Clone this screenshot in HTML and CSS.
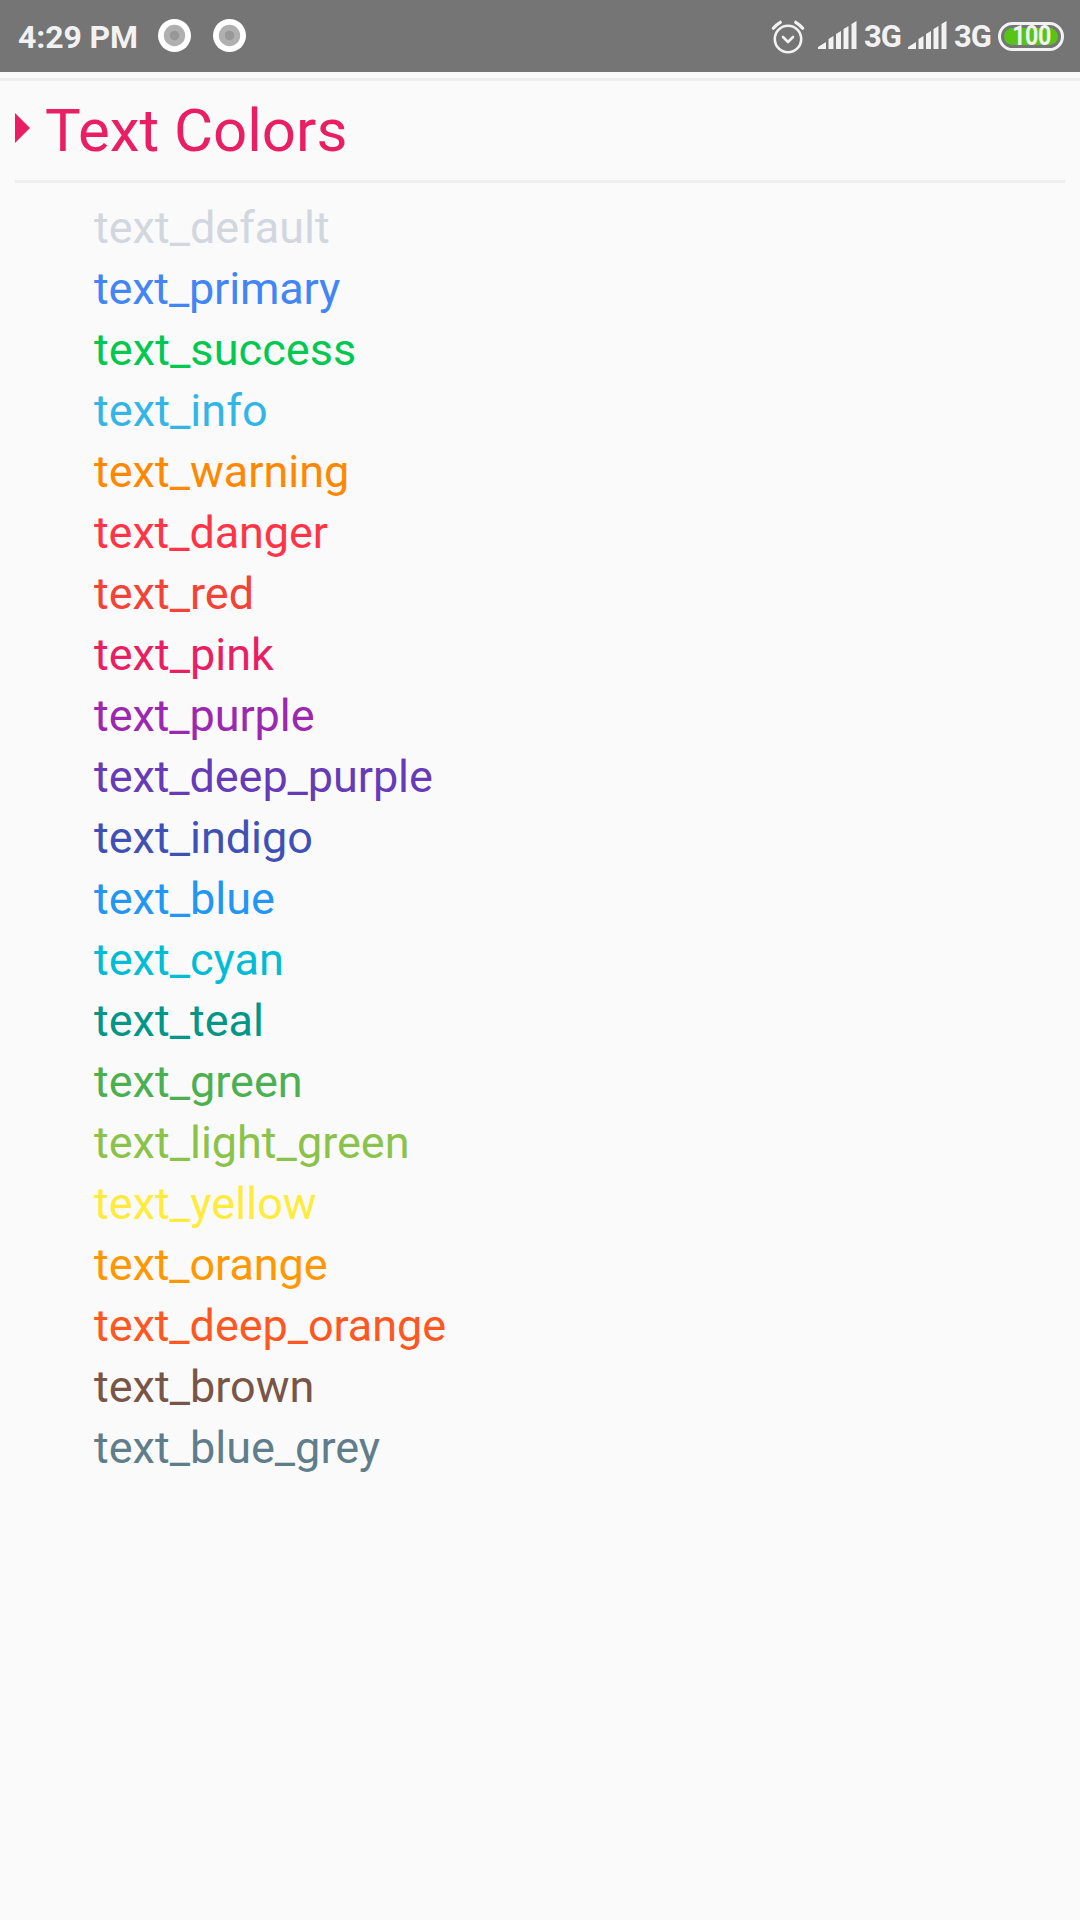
FILE: index.html
```html
<!DOCTYPE html>
<html lang="en">
<head>
<meta charset="utf-8">
<title>Text Colors</title>
<link rel="stylesheet" href="styles.css">
</head>
<body>
<header class="status">
  <span class="time">4:29 PM</span>
  <svg class="dot" viewBox="0 0 33 33"><circle cx="16.500" cy="16.500" r="16.500" fill="#fff"/><circle cx="16.500" cy="16.500" r="10.700" fill="#b0b0b0"/><circle cx="16.500" cy="16.500" r="4.800" fill="#989898"/></svg>
  <svg class="dot second" viewBox="0 0 33 33"><circle cx="16.500" cy="16.500" r="16.500" fill="#fff"/><circle cx="16.500" cy="16.500" r="10.700" fill="#b0b0b0"/><circle cx="16.500" cy="16.500" r="4.800" fill="#989898"/></svg>
  <svg class="alarm" viewBox="0 0 34 34" fill="none" stroke="#f2f2f2" stroke-width="2.6" stroke-linecap="round" stroke-linejoin="round"><circle cx="17" cy="19" r="13.2"/><path d="M12 17l5 5 5-5"/><path d="M2.300 8.200Q5.500 4.500 9.300 2.300M31.700 8.200Q28.500 4.500 24.700 2.300" stroke-width="3.200"/></svg>
  <svg class="signal" viewBox="0 0 39 28" fill="#f2f2f2"><path id="bars" d="M0 28V26L8 21V28ZM10.500 28V18L15.500 15V28ZM18 28V13L23 10V28ZM25.500 28V8L30.500 5V28ZM33.500 28V3L38.500 0V28Z"/></svg>
  <span class="net">3G</span>
  <svg class="signal" viewBox="0 0 39 28" fill="#f2f2f2"><use href="#bars"/></svg>
  <span class="net">3G</span>
  <span class="battery"><span class="level"><span class="percent">100</span></span></span>
</header>
<main>
  <h1><svg class="arrow" viewBox="0 0 15 30"><path d="M0 0 15 15 0 30z" fill="#e91e63"/></svg><span>Text Colors</span></h1>
  <ul>
    <li class="default">text_default</li>
    <li class="primary">text_primary</li>
    <li class="success">text_success</li>
    <li class="info">text_info</li>
    <li class="warning">text_warning</li>
    <li class="danger">text_danger</li>
    <li class="red">text_red</li>
    <li class="pink">text_pink</li>
    <li class="purple">text_purple</li>
    <li class="deep-purple">text_deep_purple</li>
    <li class="indigo">text_indigo</li>
    <li class="blue">text_blue</li>
    <li class="cyan">text_cyan</li>
    <li class="teal">text_teal</li>
    <li class="green">text_green</li>
    <li class="light-green">text_light_green</li>
    <li class="yellow">text_yellow</li>
    <li class="orange">text_orange</li>
    <li class="deep-orange">text_deep_orange</li>
    <li class="brown">text_brown</li>
    <li class="blue-grey">text_blue_grey</li>
  </ul>
</main>
</body>
</html>
```
FILE: styles.css
```css
* { box-sizing: border-box; }
body { margin: 0; height: 1920px; background: #fafafa; font-family: Roboto, sans-serif; }

.status { display: flex; align-items: center; height: 72px; padding: 1px 16px 0 18px; background: #757575; color: #f2f2f2; font-weight: 700; }
.time { width: 140px; font-size: 32px; letter-spacing: -.1px; white-space: nowrap; }
.dot { width: 33px; height: 33px; margin-bottom: 2px; }
.second { margin-left: 22px; margin-right: auto; }
.alarm { width: 34px; height: 34px; margin-right: 13px; }
.signal { width: 39px; height: 28px; margin-bottom: 3px; }
.net { width: 36px; margin: 0 8px 0 7px; font-size: 31px; letter-spacing: -1px; }
.battery { display: flex; width: 66px; height: 29px; padding: 3px; border: 3px solid #f2f2f2; border-radius: 15px; }
.level { display: flex; flex: 1; align-items: center; justify-content: center; border-radius: 10px; background: #56c516; }
.percent { font-size: 27px; line-height: 17px; letter-spacing: -.5px; transform: scaleX(.86); }

main { margin-top: 6px; padding: 0 15px; border-top: 3px solid #eee; }
h1 { display: flex; align-items: center; height: 102px; margin: 0; border-bottom: 3px solid #eee; color: #e91e63; font-size: 60px; font-weight: 400; }
.arrow { width: 15px; height: 30px; margin: 0 15px 6px 0; }

ul { margin: 14px 0 0; padding: 0 0 0 79px; list-style: none; }
li { height: 61px; font-size: 45px; line-height: 61px; }
.default { color: #d2d6df; }
.primary { color: #4285f4; letter-spacing: -.18px; }
.success { color: #00c851; letter-spacing: .08px; }
.info { color: #33b5e5; letter-spacing: .08px; }
.warning { color: #ff8800; }
.danger { color: #ff3547; letter-spacing: -.1px; }
.red { color: #f44336; }
.pink { color: #e91e63; }
.purple { color: #9c27b0; letter-spacing: -.08px; }
.deep-purple { color: #673ab7; letter-spacing: -.08px; }
.indigo { color: #3f51b5; }
.blue { color: #2196f3; }
.cyan { color: #00bcd4; }
.teal { color: #009688; }
.green { color: #4caf50; }
.light-green { color: #8bc34a; }
.yellow { color: #ffeb3b; letter-spacing: .05px; }
.orange { color: #ff9800; letter-spacing: -.08px; }
.deep-orange { color: #ff5722; letter-spacing: -.07px; }
.brown { color: #795548; }
.blue-grey { color: #607d8b; }
```
